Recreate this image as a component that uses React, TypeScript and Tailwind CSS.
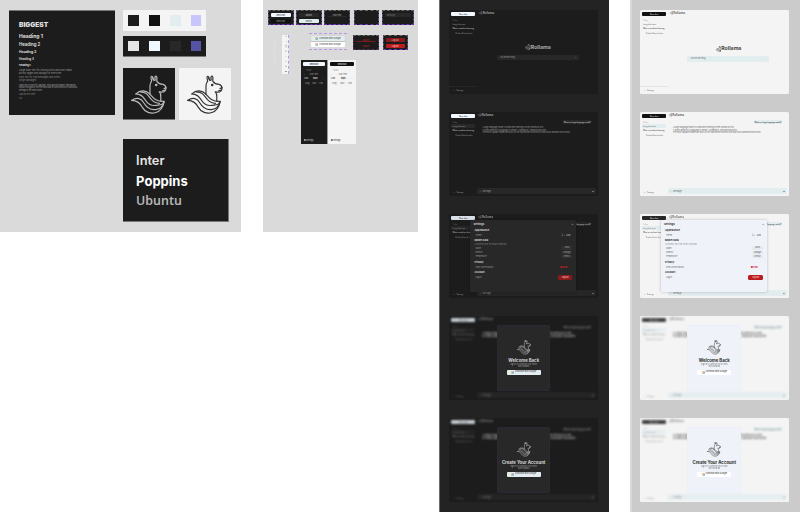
import React from "react";

type Mode = "dark" | "light";

const themes = {
  dark: {
    board: "bg-[#232323] border-l border-[#6b6b6b]",
    frame: "bg-[#1c1c1c]",
    text: "text-[#9a9a9a]",
    strong: "text-[#d4d4d4]",
    cta: "bg-[#f0f7ff] text-[#444444]",
    surface: "bg-[#282828]",
    modal: "bg-[#282828]",
    line: "border-[#282828]",
    google: "bg-[#e3edf0] text-[#444444]",
    danger: "bg-[#8a1a1c] text-[#eab0b0]",
  },
  light: {
    board: "bg-[#cbcbcb] border-l-2 border-[#d8d8d8]",
    frame: "bg-[#f4f4f4]",
    text: "text-[#6a6a6a]",
    strong: "text-[#2c2c2c]",
    cta: "bg-[#111111] text-[#cccccc]",
    surface: "bg-[#e2edf0]",
    modal: "bg-[#eff3f9]",
    line: "border-[#e4e4e4]",
    google: "bg-white text-[#444444]",
    danger: "bg-[#bb1c1f] text-[#f3c0c0]",
  },
};

function Llama({ className, stroke = 3.6 }: { className: string; stroke?: number }) {
  return (
    <svg
      viewBox="0 0 110 118"
      className={className}
      fill="none"
      stroke="currentColor"
      strokeWidth={stroke}
      strokeLinecap="round"
      strokeLinejoin="round"
    >
      <path d="M58 59V33Q58 24 63 19L61 7Q62 0 66 6L70 16L74 15L73 6Q76 0 79 6V19C84 26 91 28 98 28Q107 31 107 40Q106 52 94 52L86 51Q91 55 91 65V80" />
      <path d="M66 6L68 14M107 38L101 41M97 47L103 46" />
      <circle cx="77" cy="30" r="2.2" fill="currentColor" />
      <path d="M15 57C29 43 47 46 58 58C69 70 76 81 101 80C99 87 92 91 84 91" />
      <path d="M15 57C31 57 39 67 46 79C53 91 66 95 84 91" />
      <path d="M29 51C48 51 53 63 62 74C69 82 77 86 87 86" />
      <path d="M2 77C18 66 32 71 39 84C47 98 58 107 75 105C91 103 99 93 101 80" />
      <path d="M2 77C20 78 27 84 33 96C43 114 61 119 76 114C91 109 98 96 101 82" />
    </svg>
  );
}

function Google() {
  return (
    <svg viewBox="0 0 10 10" className="size-[3px] shrink-0" fill="none" strokeWidth="2.6">
      <path d="M8 2A4 4 0 0 0 2 2.5" stroke="#ea4335" />
      <path d="M2 2.5A4 4 0 0 0 2 7.5" stroke="#fbbc05" />
      <path d="M2 7.5A4 4 0 0 0 8 7.8" stroke="#34a853" />
      <path d="M8 7.8A4 4 0 0 0 9 5H5" stroke="#4285f4" />
    </svg>
  );
}

function Brand({ className }: { className: string }) {
  return (
    <div className={`flex items-center font-bold ${className}`}>
      <Llama className="h-[1.2em] w-[1.1em]" stroke={6} />
      <span>Rollama</span>
    </div>
  );
}

function Sidebar({ mode, home }: { mode: Mode; home?: boolean }) {
  const t = themes[mode];
  return (
    <div className={`flex w-[28px] shrink-0 flex-col px-[2px] pt-[2.3px] text-[1.8px] leading-[4.3px] ${t.text}`}>
      <div className={`h-[4px] shrink-0 rounded-[1px] text-center font-semibold leading-[4px] ${t.cta}`}>New chat</div>
      <div className="mt-[1.5px] h-[4.3px] pl-[1px] opacity-60">Today</div>
      <div className={`h-[4.3px] rounded-[1px] pl-[1px] ${home ? "" : t.surface}`}>Long chat topic</div>
      <div className={`h-[4.3px] pl-[1px] ${t.strong}`}>What is machine learning</div>
      <div className="h-[4.3px] pl-[4px]">Explain React hooks</div>
      <div className={`-mx-[2px] mt-auto flex h-[8px] items-center gap-[2px] pl-[4px] ${home ? `border-t ${t.line}` : ""}`}>
        <span>◦</span>
        <span>Settings</span>
      </div>
    </div>
  );
}

function Home({ mode }: { mode: Mode }) {
  const t = themes[mode];
  return (
    <div className="flex h-full">
      <Sidebar mode={mode} home />
      <div className={`flex flex-1 flex-col ${t.text}`}>
        <Brand className="h-[6px] pl-[2px] text-[3px]" />
        <div className={`flex flex-col items-center ${mode === "dark" ? "pt-[28px]" : "pt-[29.5px]"}`}>
          <Brand className={`h-[7px] text-[5.2px] ${mode === "dark" ? "text-[#a8a8a8]" : "text-[#444444]"}`} />
          <div className={`mt-[3.5px] flex h-[5.7px] w-[82px] items-center justify-between rounded-[1.5px] px-[3px] text-[1.9px] ${t.surface}`}>
            <span>Ask me anything</span>
            <span className={mode === "light" ? "opacity-30" : ""}>▪</span>
          </div>
        </div>
      </div>
    </div>
  );
}

function Chat({ mode, big }: { mode: Mode; big?: boolean }) {
  const t = themes[mode];
  return (
    <div className="flex h-full">
      <Sidebar mode={mode} />
      <div className={`flex flex-1 flex-col pr-[2px] ${t.text}`}>
        <Brand className="h-[6px] pl-[1px] text-[3px]" />
        <div className={`${big ? "mt-[2.5px]" : "mt-[2px]"} mr-[5px] h-[4px] w-[28px] self-end whitespace-nowrap rounded-[1px] text-center text-[1.75px] font-medium leading-[4px] ${t.surface} ${t.strong}`}>
          What is a large language model?
        </div>
        <div className={`whitespace-nowrap ${big ? "mt-[3px] pl-[5px] text-[2.7px] leading-[3.2px] font-bold" : "mt-[2.2px] pl-[5px] text-[1.9px] leading-[2.5px]"} ${big ? t.strong : ""}`}>
          <div>A large language model is a machine learning system trained on text</div>
          <div>It learns patterns in language to predict, summarize, translate and write</div>
          {!big && <div>The most capable models are built on the transformer architecture and follow detailed instructions</div>}
        </div>
        <div className={`mt-auto mb-[2px] flex h-[6px] items-center justify-between rounded-[1.5px] px-[2px] text-[2px] ${t.surface}`}>
          <span>+ &nbsp; Message</span>
          <span>▣</span>
        </div>
      </div>
    </div>
  );
}

function Setting({ label, value, mode }: { label: string; value: string; mode: Mode }) {
  return (
    <div className="flex h-[4.1px] items-center justify-between pl-[1px]">
      <span>{label}</span>
      <span className={`h-[3.7px] w-[11px] rounded-[1px] text-center leading-[3.7px] ${mode === "dark" ? "bg-[#303030]" : "bg-[#e6e9ee]"}`}>{value}</span>
    </div>
  );
}

function Settings({ mode }: { mode: Mode }) {
  const t = themes[mode];
  const head = `text-[2.5px] font-bold ${t.strong}`;
  return (
    <div className={`absolute top-[6.3px] left-[21px] flex h-[71.5px] w-[106px] flex-col rounded-[1.5px] px-[4px] pt-[0.7px] text-[1.9px] shadow-[0_0_3px_rgba(0,0,0,0.25)] ${t.modal} ${t.text}`}>
      <div className={`-mx-[1px] flex h-[7px] items-center justify-between text-[2.7px] font-bold ${t.strong}`}>
        <span>Settings</span>
        <span className="font-normal">×</span>
      </div>
      <div className={`h-[5px] leading-[5px] ${head}`}>Appearance</div>
      <div className="flex h-[5.3px] items-center justify-between pl-[1px]">
        <span>Theme</span>
        <span className={`pr-[2px] ${t.strong}`}>☼ ☾ Auto</span>
      </div>
      <div className={`h-[5px] leading-[5px] ${head}`}>Model Data</div>
      <div className="h-[3px] leading-[3px] opacity-70">Customize how the model responds</div>
      <Setting mode={mode} label="Model" value="llama" />
      <Setting mode={mode} label="Memory" value="Manage" />
      <Setting mode={mode} label="Temperature" value="Default" />
      <div className={`mt-[1.5px] h-[5px] leading-[5px] ${head}`}>Privacy</div>
      <div className="flex h-[4.5px] items-center justify-between pl-[1px]">
        <span>Clear conversations</span>
        <span className="pr-[5px] font-bold text-[#d71f23]">■ Clear</span>
      </div>
      <div className={`mt-[0.5px] h-[5px] leading-[5px] ${head}`}>Account</div>
      <div className="flex h-[5px] items-center justify-between pl-[1px]">
        <span>Logout</span>
        <span className={`h-[4.4px] w-[14.5px] rounded-[1.5px] text-center font-bold leading-[4.4px] ${t.danger}`}>Log out</span>
      </div>
    </div>
  );
}

function Auth({ mode, title }: { mode: Mode; title: string }) {
  const t = themes[mode];
  return (
    <div className={`absolute top-[9px] left-[47.5px] flex h-[66px] w-[53.5px] flex-col items-center rounded-[1px] border pt-[14px] ${mode === "dark" ? "border-[#2a2935]" : "border-[#ebeff9]"} ${t.modal} ${t.strong}`}>
      <Llama className="h-[14.5px] w-[14px] opacity-75" stroke={5} />
      <div className="mt-[3px] h-[5px] whitespace-nowrap text-[4.3px] font-bold leading-[5px]">{title}</div>
      <div className="mt-[0.5px] h-[5px] text-center text-[1.9px] leading-[2.2px] opacity-65">
        Sign in to continue your chats
        <br />
        with Rollama
      </div>
      <div className={`mt-[1.5px] flex h-[5px] w-[34px] items-center justify-center gap-[1px] rounded-[1px] text-[2.1px] font-medium ${t.google}`}>
        <Google />
        Continue with Google
      </div>
    </div>
  );
}

function Frame({ mode, children }: { mode: Mode; children: React.ReactNode }) {
  return <div className={`relative h-[84px] w-[149px] shrink-0 overflow-hidden rounded-[1.5px] ${themes[mode].frame}`}>{children}</div>;
}

function Board({ mode }: { mode: Mode }) {
  return (
    <div className={`flex h-[512px] flex-col gap-[18px] overflow-hidden pt-[10px] ${mode === "dark" ? "ml-[21.4px] w-[169.6px] pl-[9px]" : "ml-[21px] w-[170px] pl-[8px]"} ${themes[mode].board}`}>
      <Frame mode={mode}><Home mode={mode} /></Frame>
      <Frame mode={mode}><Chat mode={mode} /></Frame>
      <Frame mode={mode}>
        <div className="h-full opacity-90 blur-[0.3px]"><Chat mode={mode} /></div>
        <Settings mode={mode} />
      </Frame>
      <Frame mode={mode}>
        <div className="h-full opacity-80 blur-[1px]"><Chat mode={mode} big /></div>
        <Auth mode={mode} title="Welcome Back" />
      </Frame>
      <Frame mode={mode}>
        <div className="h-full opacity-80 blur-[1px]"><Chat mode={mode} big /></div>
        <Auth mode={mode} title="Create Your Account" />
      </Frame>
    </div>
  );
}

function Typography() {
  return (
    <div className="flex h-[105px] w-[106px] flex-col border-t border-[#777777] bg-[#1c1c1c] pt-[10px] pl-[10px] text-[#e0e0e0]">
      <div className="h-[9px] text-[6.6px] font-black leading-[9px]">BIGGEST</div>
      <div className="mt-[2px] h-[9px] text-[5px] font-bold leading-[9px]">Heading 1</div>
      <div className="h-[8px] text-[4.3px] font-semibold leading-[8px]">Heading 2</div>
      <div className="h-[7px] text-[3.5px] font-semibold leading-[7px]">Heading 3</div>
      <div className="h-[6.5px] text-[3px] font-semibold leading-[6.5px]">Heading 4</div>
      <div className="h-[6px] text-[2.4px] font-bold leading-[6px]">Heading 5</div>
      <div className="mt-[1.5px] text-[2.3px] leading-[2.6px] text-[#999999]">
        Large body text for introductions and short leads
        <br />
        across pages and dialogs for everyone
      </div>
      <div className="mt-[2.2px] text-[2.2px] leading-[2.4px] text-[#888888]">
        Body text for chat messages and others
        <br />
        longer passages
      </div>
      <div className="mt-[1.8px] w-[62px] text-[1.9px] leading-[2.3px] text-[#a5a5a5]">
        Small text is used for captions, hints and secondary information shown throughout the interface and for descriptions of individual settings or for short notes
      </div>
      <div className="mt-[2px] text-[2px] leading-[3px] text-[#808080]">Caption text here</div>
      <div className="mt-[1.5px] text-[2px] leading-[3px] text-[#808080]">Aa</div>
    </div>
  );
}

function Swatches({ className, colors }: { className: string; colors: string[] }) {
  return (
    <div className={`flex h-[21px] w-[83px] items-center gap-[10px] pl-[5px] ${className}`}>
      {colors.map((c) => (
        <div key={c} className={`size-[10.8px] ${c}`} />
      ))}
    </div>
  );
}

function Foundations() {
  return (
    <div className="flex h-[232px] w-[241px] shrink-0 items-start gap-[8.3px] bg-[#dadada] pt-[10px] pl-[9px]">
      <Typography />
      <div className="flex flex-col">
        <Swatches className="bg-[#f4f4f4]" colors={["bg-[#1c1c1c]", "bg-[#111111]", "bg-[#e2edf0]", "bg-[#c7c5f9]"]} />
        <Swatches className="mt-[5px] border-b border-[#777777] bg-[#1c1c1c]" colors={["bg-[#e6e6e6]", "bg-[#f0f8ff]", "bg-[#282828]", "bg-[#5553a4]"]} />
        <div className="mt-[11px] flex gap-[4px]">
          <div className="flex size-[52px] items-center justify-center border-b border-[#777777] bg-[#1c1c1c] text-[#b9b9b9]">
            <Llama className="mt-px h-[39px] w-[36px]" />
          </div>
          <div className="flex size-[52px] items-center justify-center bg-[#f4f4f4] text-[#333333]">
            <Llama className="h-[39px] w-[36px]" />
          </div>
        </div>
        <div className="mt-[19px] flex h-[83px] w-[106px] flex-col border-r border-b border-[#777777] bg-[#1c1c1c] pt-[12px] pl-[12.8px] text-[12.8px] leading-[20px] text-[#e6e6e6]">
          <div className="font-semibold">Inter</div>
          <div className="text-[13px] font-bold text-white">Poppins</div>
          <div className="font-['Noto_Sans',sans-serif] text-[12.4px] font-semibold text-[#b5b5b5]">Ubuntu</div>
        </div>
      </div>
    </div>
  );
}

function Variant({ className, top, bottom, topClass, bottomClass }: { className: string; top?: string; bottom?: string; topClass?: string; bottomClass?: string }) {
  return (
    <div className={`flex flex-col gap-[2px] bg-[#1c1c1c] px-[2px] pt-[1.7px] text-center text-[1.9px] font-semibold leading-[4px] ${className}`}>
      {top && <div className={`h-[4px] rounded-[1px] ${topClass}`}>{top}</div>}
      {bottom && <div className={`h-[4px] rounded-[1px] ${bottomClass}`}>{bottom}</div>}
    </div>
  );
}

function MiniSidebar({ mode }: { mode: Mode }) {
  const t = themes[mode];
  return (
    <div className={`flex h-[84px] flex-col px-[2px] pt-[2px] text-[1.9px] leading-[4.3px] ${mode === "dark" ? "w-[27px] border-r border-[#999999]" : "w-[28px]"} ${t.frame} ${t.text}`}>
      <div className={`h-[4px] rounded-[1px] text-center font-bold leading-[4px] ${t.cta}`}>New chat</div>
      <div className="mt-[1.7px] pl-[3px] opacity-60">Today</div>
      <div className="flex justify-between pr-[7px] pl-[1px]"><span>•</span><span>Chat item</span></div>
      <div className={`flex justify-between px-[1px] ${t.strong}`}><span>Chat</span><b>topic</b><span>…</span></div>
      <div className="flex justify-between px-[2px]"><span>Long</span><span>topic</span><span>chat</span></div>
      <div className={`mt-auto h-[6px] pl-[1px] ${t.strong}`}>● Settings</div>
    </div>
  );
}

function Components() {
  const dash = "border border-dashed border-t-[#666666] border-x-[#5a4a78] border-b-[#6f35c4]";
  return (
    <div className="ml-[22px] h-[232px] w-[155px] shrink-0 bg-[#dadada] pt-[10px] pl-[5px]">
      <div className="flex h-[15px] gap-[2.6px]">
        <Variant className={`w-[25.5px] ${dash}`} top="New chat" topClass="bg-[#f0f7ff] text-[#555555]" bottom="New chat" bottomClass="bg-[#111111] text-[#888888]" />
        <Variant className={`w-[25.5px] ${dash}`} top="Button" topClass="bg-[#282828] text-[#aaaaaa]" bottom="Button" bottomClass="bg-[#e2edf0] text-[#555555]" />
        <Variant className={`w-[25.5px] ${dash}`} top="Chat item" topClass="border-b border-[#292929] text-[#999999]" />
        <Variant className={`ml-[1.5px] w-[25.5px] ${dash}`} />
        <Variant className={`w-[32px] ${dash}`} top="Message" topClass="bg-[#282828] pl-[2px] text-left text-[#666666]" />
      </div>
      <div className="mt-[8px] flex h-[41px] items-start">
        <div className="mt-[7px] flex w-[10px] flex-col items-center pl-[3px] text-[3px] leading-[5px] text-[#e8e8e8]">
          <span>○</span><span>◇</span><span>○</span><span>□</span><span>○</span><span>◇</span>
        </div>
        <div className="mt-[2px] ml-[4px] flex h-[39px] w-[7px] flex-col items-center justify-around border-r border-dashed border-[#b99ae6] bg-[#f4f4f4] pl-[2px] text-[2.4px] leading-[4px] text-[#666666]">
          <span>+</span><span>⌕</span><span>☼</span><span>✎</span><span>☾</span><span>×</span><span>⚙</span><span>▣</span>
        </div>
        <div className="ml-[20px] flex h-[17px] w-[38px] flex-col items-center justify-center gap-[1.5px] border-y border-dashed border-[#b99ae6] text-[2.1px] font-medium">
          <div className="flex h-[5.2px] w-[34px] items-center justify-center gap-[1px] rounded-[1px] bg-[#e2edf0] text-[#555555] shadow-[0_0.5px_1px_#aaaaaa]"><Google />Continue with Google</div>
          <div className="flex h-[5px] w-[34px] items-center justify-center gap-[1px] rounded-[1px] bg-white text-[#555555]"><Google />Continue with Google</div>
        </div>
        <Variant className="mt-[2px] ml-[6px] h-[14.5px] w-[25.5px] border border-dashed border-t-[#666666] border-x-[#54304a] border-b-[#54304a]" top="Log out" topClass="border-b border-[#7a191c] text-[#a02528]" bottom="Log out" bottomClass="text-[#a02528]" />
        <Variant className={`mt-[2px] ml-[4px] h-[14.5px] w-[25.5px] ${dash}`} top="Log out" topClass="bg-[#8a1a1c] text-[#d9a0a0]" bottom="Log out" bottomClass="bg-[#bb1c1f] text-[#f1bbbb]" />
      </div>
      <div className="mt-[-14px] ml-[33px] flex">
        <MiniSidebar mode="dark" />
        <MiniSidebar mode="light" />
      </div>
    </div>
  );
}

export default function App() {
  return (
    <div className="flex h-[512px] w-[800px] items-start overflow-hidden bg-white font-['Inter','Noto_Sans',sans-serif]">
      <Foundations />
      <Components />
      <Board mode="dark" />
      <Board mode="light" />
    </div>
  );
}
